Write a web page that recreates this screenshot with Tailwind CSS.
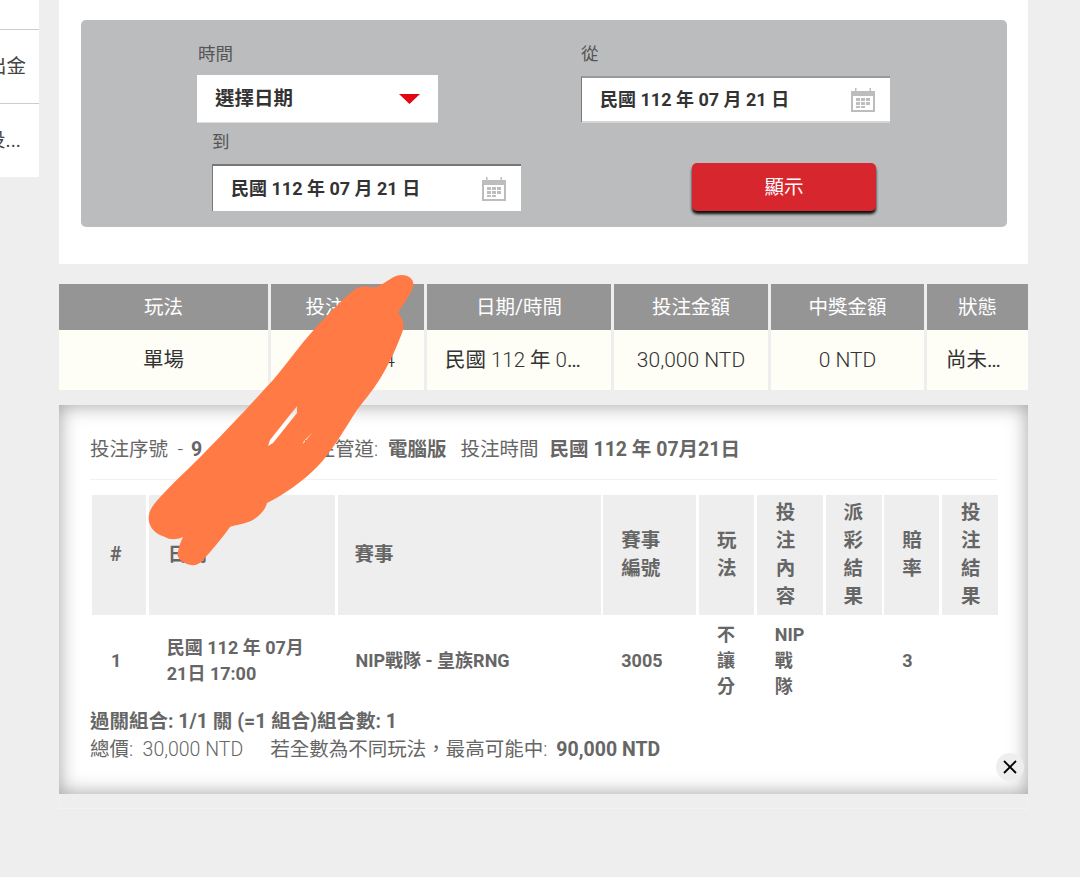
<!DOCTYPE html>
<html lang="zh-Hant">

<head>
    <meta charset="UTF-8">
    <meta name="viewport" content="width=device-width, initial-scale=1.0">
    <title>投注紀錄</title>
    <script src="https://cdn.jsdelivr.net/npm/@tailwindcss/browser@4"></script>
</head>

<body class="bg-[#eeeeee] font-[Roboto,'Noto_Sans_CJK_TC',sans-serif] text-[#666666]">
    <div class="relative h-[877px] w-[1080px] overflow-hidden flex items-start">

        <!-- Side menu, cut off by the left edge -->
        <div class="w-[39px] h-[177px] bg-white text-[19.5px] text-[#444444] shrink-0 overflow-hidden">
            <div class="h-[30px] border-b border-[#cccccc]"></div>
            <div class="h-[74px] border-b border-[#cccccc] flex items-center justify-end pr-[13px] whitespace-nowrap">出金</div>
            <div class="h-[73px] flex items-center justify-end pr-[18px] whitespace-nowrap">投...</div>
        </div>

        <div class="w-[969px] ml-[20px] shrink-0">

            <!-- Search filter -->
            <div class="bg-white h-[264px] pt-[20px] pl-[22px] pr-[21px]">
                <div class="bg-[#bbbcbe] h-[207px] rounded-[5px]">
                    <div class="flex pl-[116px] pt-[23px]">
                        <div class="w-[241px]">
                            <div class="h-[22px] leading-[22px] text-[17.5px] pl-[1px] text-[#555555]">時間</div>
                            <div class="mt-[10px] h-[48px] bg-white flex items-center justify-between pl-[18px] pr-[18px] text-[19.5px] font-bold text-[#333333] border-b border-[#dddddd]">
                                <span>選擇日期</span>
                                <svg width="21" height="10" viewBox="0 0 21 10"><path d="M0 0H21L10.5 10Z" fill="#e30613"/></svg>
                            </div>
                        </div>
                        <div class="w-[309px] ml-[143px]">
                            <div class="h-[22px] leading-[22px] text-[17.5px] text-[#555555]">從</div>
                            <div class="mt-[11px] h-[47px] bg-white flex items-center justify-between pl-[18px] pr-[15px] text-[18px] font-bold text-[#333333] border-t-2 border-l border-b-2 border-t-[#999999] border-l-[#777777] border-b-[#d5d5d5]">
                                <span>民國 112 年 07 月 21 日</span>
                                <svg width="24" height="24" viewBox="0 0 24 24" fill="#bdbdbd"><path d="M0 3H4V0H5.5V3H18.500V0H20V3H24V24H0ZM2 8V22H22V8Z" fill-rule="evenodd"/><path d="M5 10h4v3H5zM10 10h4v3h-4zM15 10h4v3h-4zM5 14h4v3H5zM10 14h4v3h-4zM15 14h4v3h-4zM5 18h4v2H5zM10 18h4v2h-4z"/></svg>
                            </div>
                        </div>
                    </div>
                    <div class="flex items-start pl-[131px] pt-[8px]">
                        <div class="w-[309px]">
                            <div class="h-[22px] leading-[22px] text-[17.5px] text-[#555555]">到</div>
                            <div class="mt-[11px] h-[47px] bg-white flex items-center justify-between pl-[18px] pr-[15px] text-[18px] font-bold text-[#333333] border-t-2 border-l border-t-[#777777] border-l-[#777777]">
                                <span>民國 112 年 07 月 21 日</span>
                                <svg width="24" height="24" viewBox="0 0 24 24" fill="#bdbdbd"><path d="M0 3H4V0H5.5V3H18.500V0H20V3H24V24H0ZM2 8V22H22V8Z" fill-rule="evenodd"/><path d="M5 10h4v3H5zM10 10h4v3h-4zM15 10h4v3h-4zM5 14h4v3H5zM10 14h4v3h-4zM15 14h4v3h-4zM5 18h4v2H5zM10 18h4v2h-4z"/></svg>
                            </div>
                        </div>
                        <button class="ml-[171px] mt-[32px] w-[184px] h-[48px] pt-[1px] bg-[#d8262e] text-white text-[19.5px] rounded-[5px] shadow-[0_3px_3px_rgba(0,0,0,0.95)]">顯示</button>
                    </div>
                </div>
            </div>

            <!-- Bet summary -->
            <div class="mt-[20px] grid grid-cols-[209px_153px_184px_154px_153px_101px] gap-x-[3px] text-[19.5px]">
                <div class="h-[46px] pt-[1px] bg-[#959595] text-white flex items-center justify-center">玩法</div>
                <div class="h-[46px] pt-[1px] bg-[#959595] text-white flex items-center justify-center pr-[6px]">投注序號</div>
                <div class="h-[46px] pt-[1px] bg-[#959595] text-white flex items-center justify-center">日期/時間</div>
                <div class="h-[46px] pt-[1px] bg-[#959595] text-white flex items-center justify-center">投注金額</div>
                <div class="h-[46px] pt-[1px] bg-[#959595] text-white flex items-center justify-center">中獎金額</div>
                <div class="h-[46px] pt-[1px] bg-[#959595] text-white flex items-center justify-center">狀態</div>

                <div class="h-[60px] bg-[#fefef6] text-[20.5px] text-[#333333] flex items-center justify-center">單場</div>
                <div class="h-[60px] pt-[1px] bg-[#fefef6] text-[21px] font-light text-[#333333] flex items-center justify-end pr-[29px]">4</div>
                <div class="h-[60px] bg-[#fefef6] text-[20.5px] text-[#333333] leading-[61px] pl-[18px] pr-[22px] truncate">民國<span class="font-light"> 112 </span>年<span class="font-light"> 07 </span>月<span class="font-light"> 21 </span>日</div>
                <div class="h-[60px] pt-[1px] bg-[#fefef6] text-[21px] font-light text-[#333333] flex items-center justify-center">30,000 NTD</div>
                <div class="h-[60px] pt-[1px] bg-[#fefef6] text-[21px] font-light text-[#333333] flex items-center justify-center">0 NTD</div>
                <div class="h-[60px] bg-[#fefef6] text-[20.5px] text-[#333333] leading-[61px] pl-[19px] pr-[16px] truncate">尚未開獎</div>
            </div>

            <!-- Bet detail -->
            <div class="relative mt-[15px] h-[389px] bg-white px-[31px] pt-[31px] shadow-[inset_0_0_20px_rgba(0,0,0,0.38)]">
                <div class="h-[28px] leading-[28px] text-[19.5px] flex whitespace-nowrap">
                    <span>投注序號 <span class="font-light">&nbsp;-&nbsp;</span></span>
                    <span class="font-bold ml-[3px] w-[105px]">9</span>
                    <span>投注管道<span class="font-light">:</span></span>
                    <span class="font-bold ml-[10px]">電腦版</span>
                    <span class="ml-[14px]">投注時間</span>
                    <span class="font-bold ml-[11px]">民國 112 年 07月21日</span>
                </div>
                <div class="mt-[15px] border-t border-[#f2f2f2]"></div>

                <div class="mt-[15px] ml-[2px] grid grid-cols-[54px_186px_263px_93px_55px_66px_56px_55px_56px] gap-x-[2.75px] text-[19.5px] font-bold leading-[28px]">
                    <div class="h-[120px] bg-[#eeeeee] flex items-center pl-[18px]">#</div>
                    <div class="h-[120px] bg-[#eeeeee] flex items-center pl-[19px] pr-[18px]">日期</div>
                    <div class="h-[120px] bg-[#eeeeee] flex items-center pl-[17px] pr-[18px]">賽事</div>
                    <div class="h-[120px] bg-[#eeeeee] flex items-center pl-[18px] pr-[18px]">賽事<br>編號</div>
                    <div class="h-[120px] bg-[#eeeeee] flex items-center pl-[18px] pr-[15px]">玩法</div>
                    <div class="h-[120px] bg-[#eeeeee] flex items-center pl-[19px] pr-[16px]">投注內容</div>
                    <div class="h-[120px] bg-[#eeeeee] flex items-center pl-[18px] pr-[16px]">派彩結果</div>
                    <div class="h-[120px] bg-[#eeeeee] flex items-center pl-[18px] pr-[15px]">賠率</div>
                    <div class="h-[120px] bg-[#eeeeee] flex items-center pl-[19px] pr-[15px]">投注結果</div>

                    <div class="h-[92px] flex items-center px-[19px] text-[18px] leading-[26px]">1</div>
                    <div class="h-[92px] flex items-center px-[18px] text-[18px] leading-[26px]">民國 112 年 07月 21日 17:00</div>
                    <div class="h-[92px] flex items-center pl-[18px] text-[18px] leading-[26px]">NIP戰隊 - 皇族RNG</div>
                    <div class="h-[92px] flex items-center px-[18px] text-[18px] leading-[26px]">3005</div>
                    <div class="h-[92px] flex items-center pl-[18px] pr-[15px] text-[18px] leading-[26px]">不讓分</div>
                    <div class="h-[92px] flex items-center pl-[18px] pr-[16px] text-[18px] leading-[26px]">NIP 戰隊</div>
                    <div class="h-[92px]"></div>
                    <div class="h-[92px] flex items-center px-[18px] text-[18px] leading-[26px]">3</div>
                    <div class="h-[92px]"></div>
                </div>

                <div class="mt-[1px] h-[28px] leading-[28px] text-[19.5px] font-bold">過關組合: 1/1 關 (=1 組合)組合數: 1</div>
                <div class="h-[28px] leading-[28px] text-[19.5px] flex whitespace-nowrap">
                    <span>總價<span class="font-light">: &nbsp;30,000 NTD</span></span>
                    <span class="ml-[27px]">若全數為不同玩法，最高可能中<span class="font-light">:</span></span>
                    <span class="font-bold ml-[9px]">90,000 NTD</span>
                </div>

                <!-- Close button -->
                <button class="absolute right-[4px] bottom-[13px] w-[28px] h-[28px] rounded-full bg-[#eeeeee] flex items-center justify-center">
                    <svg width="14" height="14" viewBox="0 0 14 14"><path d="M1 1L13 13M13 1L1 13" stroke="#000000" stroke-width="1.800" fill="none"/></svg>
                </button>
            </div>
            <div class="h-[15px] border border-t-0 border-[#f2f2f2]"></div>
        </div>

        <!-- Orange marker scribble on top of the screenshot -->
        <svg class="absolute left-0 top-0 pointer-events-none" width="1080" height="877" viewBox="0 0 1080 877">
            <path fill="#ff7a45" fill-rule="evenodd" d="M402 275C410 275 415 281 413 287C410 296 403 304 398 313C403 318 405 325 402 333C396 348 392 358 384 372C375 388 366 398 357 410C345 428 332 452 317 467C302 482 285 494 267 503C265 512 255 520 248 522C240 525 235 525 230 527C222 538 212 550 203 560C198 566 192 566 187 564C180 561 176 556 178 552C179 546 181 541 183 537C176 540 170 540 165 537C158 535 152 530 150 525C147 518 149 510 155 503C170 485 190 468 207 450C230 427 252 403 273 380C290 360 305 338 323 320C335 308 345 296 357 288C363 286 369 286 373 288C380 286 387 281 392 278C395 276 398 275 402 275ZM297 406L297 413L273 443L268 446L270 440ZM313 432L302 445L304 441Z"/>
        </svg>
    </div>
</body>

</html>
